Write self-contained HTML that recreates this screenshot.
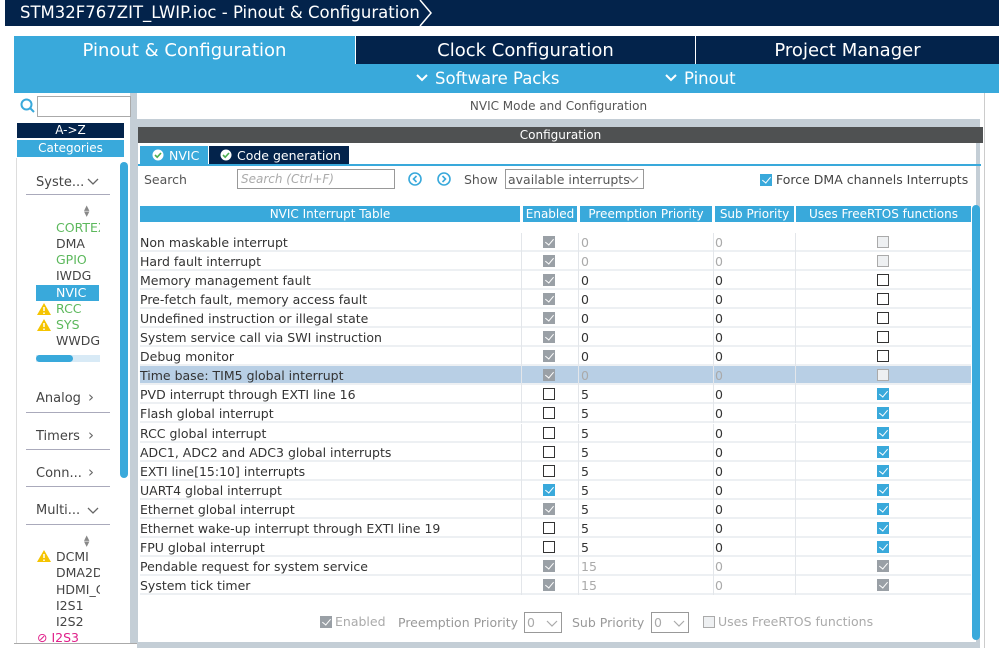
<!DOCTYPE html>
<html><head><meta charset="utf-8"><style>
*{margin:0;padding:0;box-sizing:border-box}
body{width:999px;height:648px;overflow:hidden;background:#fff;font-family:"DejaVu Sans","Liberation Sans",sans-serif;font-size:12.5px;color:#333;position:relative}
.a{position:absolute;white-space:nowrap}
.navy{background:#03234b}
.lb{background:#39a9db}
.cb{position:absolute;width:12px;height:12px;border:1px solid #333;background:#fff}
.cb.g{background:#9aa0a6;border-color:#9aa0a6}
.cb.gu{border-color:#aaa;background:#eef0f2}
.cb.b{background:#39a9db;border-color:#39a9db}
.cb.g::after,.cb.b::after{content:"";position:absolute;left:3px;top:0px;width:4px;height:7px;border:solid #fff;border-width:0 1.5px 1.5px 0;transform:rotate(40deg)}
.row{position:absolute;left:140px;width:831px;height:19.1px;border-bottom:2px solid #edf0f3}
.row span{position:absolute;top:2px;white-space:nowrap}
.row .gr{color:#aaa}
.vs{position:absolute;top:0;height:19px;width:1px;background:#e3e6ea}
.cat{position:absolute;left:37px;font-size:12.5px;color:#444;white-space:nowrap}
.warn{position:absolute;left:37px}
</style></head><body>
<div class="a navy" style="left:5px;top:0;width:994px;height:26px"></div>
<div class="a" style="left:20px;top:3px;color:#fff;font-size:16.5px">STM32F767ZIT_LWIP.ioc - Pinout &amp; Configuration</div>
<svg class="a" style="left:418px;top:0" width="18" height="27"><path d="M2 0 L13 13 L2 26" stroke="#fff" stroke-width="1.5" fill="none"/></svg>
<div class="a lb" style="left:14px;top:36px;width:341px;height:28px;color:#fff;font-size:18px;text-align:center;line-height:30px">Pinout &amp; Configuration</div>
<div class="a navy" style="left:356px;top:36px;width:339px;height:28px;color:#fff;font-size:18px;text-align:center;line-height:30px">Clock Configuration</div>
<div class="a navy" style="left:696px;top:36px;width:303px;height:28px;color:#fff;font-size:18px;text-align:center;line-height:30px">Project Manager</div>
<div class="a lb" style="left:14px;top:64px;width:985px;height:29px"></div>
<svg class="a" style="left:415px;top:73px" width="14" height="10"><path d="M2 2 L7 7 L12 2" stroke="#fff" stroke-width="2" fill="none"/></svg>
<div class="a" style="left:435px;top:69px;color:#fff;font-size:16.5px">Software Packs</div>
<svg class="a" style="left:664px;top:73px" width="14" height="10"><path d="M2 2 L7 7 L12 2" stroke="#fff" stroke-width="2" fill="none"/></svg>
<div class="a" style="left:684px;top:69px;color:#fff;font-size:16.5px">Pinout</div>
<div class="a" style="left:14px;top:93px;width:124px;height:555px;background:#c4ced6"></div>
<div class="a" style="left:14px;top:93px;width:116px;height:555px;background:#fff"></div>
<svg class="a" style="left:20px;top:98px" width="16" height="16"><circle cx="6.5" cy="6.5" r="5" stroke="#39a9db" stroke-width="2" fill="none"/><path d="M10 10 L14 14" stroke="#39a9db" stroke-width="2"/></svg>
<div class="a" style="left:37px;top:96px;width:94px;height:21px;border:1px solid #aaa"></div>
<div class="a navy" style="left:17px;top:123px;width:107px;height:15px;color:#fff;font-size:12px;text-align:center;line-height:15px">A-&gt;Z</div>
<div class="a lb" style="left:17px;top:140px;width:107px;height:17px;color:#fff;font-size:12px;text-align:center;line-height:17px">Categories</div>
<div class="a" style="left:16px;top:158px;width:112px;height:490px;border-left:1px solid #ddd"></div>
<div class="a lb" style="left:120px;top:162px;width:8px;height:316px;border-radius:4px"></div>
<div class="a" style="left:36px;top:175px;font-size:13px;color:#444">Syste...</div>
<svg class="a" style="left:87px;top:177px" width="12" height="9"><path d="M1 2 L6 7 L11 2" stroke="#666" stroke-width="1.3" fill="none"/></svg>
<div class="a" style="left:26px;top:194px;width:84px;height:1px;background:#aab"></div>
<div class="a" style="left:84px;top:205px;font-size:7px;color:#888;line-height:6px">▲<br>▼</div>
<div class="cat" style="left:56px;top:220px;color:#5cb85c;width:44px;overflow:hidden">CORTEX</div>
<div class="cat" style="left:56px;top:236px">DMA</div>
<div class="cat" style="left:56px;top:252px;color:#5cb85c">GPIO</div>
<div class="cat" style="left:56px;top:268px">IWDG</div>
<div class="a lb" style="left:36px;top:285px;width:63px;height:16px"></div>
<div class="cat" style="left:56px;top:285px;color:#fff">NVIC</div>
<svg class="warn" style="top:303px" width="14" height="12"><path d="M7 0 L14 12 L0 12Z" fill="#f5c400"/><path d="M7 4 V8 M7 9.5 V11" stroke="#fff" stroke-width="1.5"/></svg><div class="cat" style="left:56px;top:301px;color:#5cb85c">RCC</div>
<svg class="warn" style="top:319px" width="14" height="12"><path d="M7 0 L14 12 L0 12Z" fill="#f5c400"/><path d="M7 4 V8 M7 9.5 V11" stroke="#fff" stroke-width="1.5"/></svg><div class="cat" style="left:56px;top:317px;color:#5cb85c">SYS</div>
<div class="cat" style="left:56px;top:333px">WWDG</div>
<div class="a" style="left:36px;top:355px;width:64px;height:7px;background:#d8eaf6"></div>
<div class="a lb" style="left:36px;top:355px;width:37px;height:7px;border-radius:4px"></div>
<div class="a" style="left:36px;top:391px;font-size:13px;color:#444">Analog</div><div class="a" style="left:88px;top:388px;font-size:15px;color:#666">›</div>
<div class="a" style="left:26px;top:412px;width:84px;height:1px;background:#aab"></div>
<div class="a" style="left:36px;top:429px;font-size:13px;color:#444">Timers</div><div class="a" style="left:88px;top:426px;font-size:15px;color:#666">›</div>
<div class="a" style="left:26px;top:449px;width:84px;height:1px;background:#aab"></div>
<div class="a" style="left:36px;top:466px;font-size:13px;color:#444">Conn...</div><div class="a" style="left:88px;top:463px;font-size:15px;color:#666">›</div>
<div class="a" style="left:26px;top:486px;width:84px;height:1px;background:#aab"></div>
<div class="a" style="left:36px;top:503px;font-size:13px;color:#444">Multi...</div>
<svg class="a" style="left:87px;top:506px" width="12" height="9"><path d="M1 2 L6 7 L11 2" stroke="#666" stroke-width="1.3" fill="none"/></svg>
<div class="a" style="left:26px;top:524px;width:84px;height:1px;background:#aab"></div>
<div class="a" style="left:84px;top:535px;font-size:7px;color:#888;line-height:6px">▲<br>▼</div>
<svg class="warn" style="top:550px" width="14" height="12"><path d="M7 0 L14 12 L0 12Z" fill="#f5c400"/><path d="M7 4 V8 M7 9.5 V11" stroke="#fff" stroke-width="1.5"/></svg><div class="cat" style="left:56px;top:549px">DCMI</div>
<div class="cat" style="left:56px;top:565px;width:44px;overflow:hidden">DMA2D</div>
<div class="cat" style="left:56px;top:582px;width:44px;overflow:hidden">HDMI_C</div>
<div class="cat" style="left:56px;top:598px">I2S1</div>
<div class="cat" style="left:56px;top:614px">I2S2</div>
<div class="cat" style="left:37px;top:630px;color:#e0208a">⊘ I2S3</div>
<div class="a" style="left:14px;top:643px;width:124px;height:5px;background:#fff;border-top:1px solid #aaa"></div>
<div class="a" style="left:137px;top:93px;width:843px;height:555px;background:#c4ced6"></div>
<div class="a" style="left:137px;top:93px;width:843px;height:26px;background:#fff;text-align:center;line-height:26px;font-size:12px;color:#555">NVIC Mode and Configuration</div>
<div class="a" style="left:138px;top:127px;width:845px;height:16px;background:#4f5152;color:#fff;font-size:12px;text-align:center;line-height:16px">Configuration</div>
<div class="a" style="left:138px;top:143px;width:838px;height:499px;background:#fff"></div>
<div class="a lb" style="left:140px;top:146px;width:68px;height:19px;color:#fff;font-size:12.5px;line-height:19px;padding-left:29px">NVIC</div>
<div class="a navy" style="left:209px;top:146px;width:140px;height:19px;color:#fff;font-size:12.5px;line-height:19px;padding-left:28px">Code generation</div>
<svg class="a" style="left:152px;top:149px" width="12" height="12"><circle cx="6" cy="6" r="5.5" fill="#fff"/><path d="M3 6 L5.2 8.2 L9 4" stroke="#4caf50" stroke-width="1.6" fill="none"/></svg>
<svg class="a" style="left:220px;top:149px" width="12" height="12"><circle cx="6" cy="6" r="5.5" fill="#fff"/><path d="M3 6 L5.2 8.2 L9 4" stroke="#4caf50" stroke-width="1.6" fill="none"/></svg>
<div class="a lb" style="left:138px;top:164px;width:843px;height:2px"></div>
<div class="a" style="left:144px;top:172px;font-size:12.5px;color:#555">Search</div>
<div class="a" style="left:237px;top:169px;width:158px;height:20px;border:1px solid #999;color:#aaa;font-style:italic;font-size:12px;padding:2px 3px">Search (Ctrl+F)</div>
<svg class="a" style="left:407px;top:171px" width="48" height="16"><circle cx="8" cy="8" r="6" stroke="#39a9db" stroke-width="1.6" fill="none"/><path d="M9.5 5 L6.5 8 L9.5 11" stroke="#39a9db" stroke-width="1.6" fill="none"/><circle cx="37" cy="8" r="6" stroke="#39a9db" stroke-width="1.6" fill="none"/><path d="M35.5 5 L38.5 8 L35.5 11" stroke="#39a9db" stroke-width="1.6" fill="none"/></svg>
<div class="a" style="left:464px;top:172px;color:#555">Show</div>
<div class="a" style="left:505px;top:169px;width:139px;height:20px;border:1px solid #999;color:#555;font-size:12.5px;padding:2px 2px;overflow:hidden">available interrupts</div>
<svg class="a" style="left:627px;top:175px" width="12" height="9"><path d="M1 2 L6 7 L11 2" stroke="#888" stroke-width="1.2" fill="none"/></svg>
<div class="cb b" style="left:760px;top:174px"></div>
<div class="a" style="left:776px;top:172px;color:#444;font-size:12.5px">Force DMA channels Interrupts</div>
<div class="a lb" style="left:140px;top:206px;width:380px;height:16px;color:#fff;font-size:12px;text-align:center;line-height:16px">NVIC Interrupt Table</div>
<div class="a lb" style="left:523px;top:206px;width:54px;height:16px;color:#fff;font-size:12px;text-align:center;line-height:16px">Enabled</div>
<div class="a lb" style="left:580px;top:206px;width:132px;height:16px;color:#fff;font-size:12px;text-align:center;line-height:16px">Preemption Priority</div>
<div class="a lb" style="left:715px;top:206px;width:79px;height:16px;color:#fff;font-size:12px;text-align:center;line-height:16px">Sub Priority</div>
<div class="a lb" style="left:796px;top:206px;width:175px;height:16px;color:#fff;font-size:12px;text-align:center;line-height:16px">Uses FreeRTOS functions</div>
<div class="a lb" style="left:972px;top:205px;width:8px;height:435px;border-radius:4px"></div>
<div class="row" style="top:232.5px"><span>Non maskable interrupt</span><div class="vs" style="left:381px"></div><div class="cb g" style="left:403px;top:3px"></div><div class="vs" style="left:438px"></div><span class="gr" style="left:441px">0</span><div class="vs" style="left:573px"></div><span class="gr" style="left:575px">0</span><div class="vs" style="left:655px"></div><div class="cb gu" style="left:737px;top:3px"></div></div>
<div class="row" style="top:251.6px"><span>Hard fault interrupt</span><div class="vs" style="left:381px"></div><div class="cb g" style="left:403px;top:3px"></div><div class="vs" style="left:438px"></div><span class="gr" style="left:441px">0</span><div class="vs" style="left:573px"></div><span class="gr" style="left:575px">0</span><div class="vs" style="left:655px"></div><div class="cb gu" style="left:737px;top:3px"></div></div>
<div class="row" style="top:270.7px"><span>Memory management fault</span><div class="vs" style="left:381px"></div><div class="cb g" style="left:403px;top:3px"></div><div class="vs" style="left:438px"></div><span style="left:441px">0</span><div class="vs" style="left:573px"></div><span style="left:575px">0</span><div class="vs" style="left:655px"></div><div class="cb" style="left:737px;top:3px"></div></div>
<div class="row" style="top:289.8px"><span>Pre-fetch fault, memory access fault</span><div class="vs" style="left:381px"></div><div class="cb g" style="left:403px;top:3px"></div><div class="vs" style="left:438px"></div><span style="left:441px">0</span><div class="vs" style="left:573px"></div><span style="left:575px">0</span><div class="vs" style="left:655px"></div><div class="cb" style="left:737px;top:3px"></div></div>
<div class="row" style="top:308.9px"><span>Undefined instruction or illegal state</span><div class="vs" style="left:381px"></div><div class="cb g" style="left:403px;top:3px"></div><div class="vs" style="left:438px"></div><span style="left:441px">0</span><div class="vs" style="left:573px"></div><span style="left:575px">0</span><div class="vs" style="left:655px"></div><div class="cb" style="left:737px;top:3px"></div></div>
<div class="row" style="top:328px"><span>System service call via SWI instruction</span><div class="vs" style="left:381px"></div><div class="cb g" style="left:403px;top:3px"></div><div class="vs" style="left:438px"></div><span style="left:441px">0</span><div class="vs" style="left:573px"></div><span style="left:575px">0</span><div class="vs" style="left:655px"></div><div class="cb" style="left:737px;top:3px"></div></div>
<div class="row" style="top:347.1px"><span>Debug monitor</span><div class="vs" style="left:381px"></div><div class="cb g" style="left:403px;top:3px"></div><div class="vs" style="left:438px"></div><span style="left:441px">0</span><div class="vs" style="left:573px"></div><span style="left:575px">0</span><div class="vs" style="left:655px"></div><div class="cb" style="left:737px;top:3px"></div></div>
<div class="row" style="top:366.2px;background:#b8cfe5"><span>Time base: TIM5 global interrupt</span><div class="vs" style="left:381px"></div><div class="cb g" style="left:403px;top:3px"></div><div class="vs" style="left:438px"></div><span class="gr" style="left:441px">0</span><div class="vs" style="left:573px"></div><span class="gr" style="left:575px">0</span><div class="vs" style="left:655px"></div><div class="cb gu" style="left:737px;top:3px"></div></div>
<div class="row" style="top:385.3px"><span>PVD interrupt through EXTI line 16</span><div class="vs" style="left:381px"></div><div class="cb" style="left:403px;top:3px"></div><div class="vs" style="left:438px"></div><span style="left:441px">5</span><div class="vs" style="left:573px"></div><span style="left:575px">0</span><div class="vs" style="left:655px"></div><div class="cb b" style="left:737px;top:3px"></div></div>
<div class="row" style="top:404.4px"><span>Flash global interrupt</span><div class="vs" style="left:381px"></div><div class="cb" style="left:403px;top:3px"></div><div class="vs" style="left:438px"></div><span style="left:441px">5</span><div class="vs" style="left:573px"></div><span style="left:575px">0</span><div class="vs" style="left:655px"></div><div class="cb b" style="left:737px;top:3px"></div></div>
<div class="row" style="top:423.5px"><span>RCC global interrupt</span><div class="vs" style="left:381px"></div><div class="cb" style="left:403px;top:3px"></div><div class="vs" style="left:438px"></div><span style="left:441px">5</span><div class="vs" style="left:573px"></div><span style="left:575px">0</span><div class="vs" style="left:655px"></div><div class="cb b" style="left:737px;top:3px"></div></div>
<div class="row" style="top:442.6px"><span>ADC1, ADC2 and ADC3 global interrupts</span><div class="vs" style="left:381px"></div><div class="cb" style="left:403px;top:3px"></div><div class="vs" style="left:438px"></div><span style="left:441px">5</span><div class="vs" style="left:573px"></div><span style="left:575px">0</span><div class="vs" style="left:655px"></div><div class="cb b" style="left:737px;top:3px"></div></div>
<div class="row" style="top:461.7px"><span>EXTI line[15:10] interrupts</span><div class="vs" style="left:381px"></div><div class="cb" style="left:403px;top:3px"></div><div class="vs" style="left:438px"></div><span style="left:441px">5</span><div class="vs" style="left:573px"></div><span style="left:575px">0</span><div class="vs" style="left:655px"></div><div class="cb b" style="left:737px;top:3px"></div></div>
<div class="row" style="top:480.8px"><span>UART4 global interrupt</span><div class="vs" style="left:381px"></div><div class="cb b" style="left:403px;top:3px"></div><div class="vs" style="left:438px"></div><span style="left:441px">5</span><div class="vs" style="left:573px"></div><span style="left:575px">0</span><div class="vs" style="left:655px"></div><div class="cb b" style="left:737px;top:3px"></div></div>
<div class="row" style="top:499.9px"><span>Ethernet global interrupt</span><div class="vs" style="left:381px"></div><div class="cb g" style="left:403px;top:3px"></div><div class="vs" style="left:438px"></div><span style="left:441px">5</span><div class="vs" style="left:573px"></div><span style="left:575px">0</span><div class="vs" style="left:655px"></div><div class="cb b" style="left:737px;top:3px"></div></div>
<div class="row" style="top:519px"><span>Ethernet wake-up interrupt through EXTI line 19</span><div class="vs" style="left:381px"></div><div class="cb" style="left:403px;top:3px"></div><div class="vs" style="left:438px"></div><span style="left:441px">5</span><div class="vs" style="left:573px"></div><span style="left:575px">0</span><div class="vs" style="left:655px"></div><div class="cb b" style="left:737px;top:3px"></div></div>
<div class="row" style="top:538.1px"><span>FPU global interrupt</span><div class="vs" style="left:381px"></div><div class="cb" style="left:403px;top:3px"></div><div class="vs" style="left:438px"></div><span style="left:441px">5</span><div class="vs" style="left:573px"></div><span style="left:575px">0</span><div class="vs" style="left:655px"></div><div class="cb b" style="left:737px;top:3px"></div></div>
<div class="row" style="top:557.2px"><span>Pendable request for system service</span><div class="vs" style="left:381px"></div><div class="cb g" style="left:403px;top:3px"></div><div class="vs" style="left:438px"></div><span class="gr" style="left:441px">15</span><div class="vs" style="left:573px"></div><span class="gr" style="left:575px">0</span><div class="vs" style="left:655px"></div><div class="cb g" style="left:737px;top:3px"></div></div>
<div class="row" style="top:576.3px"><span>System tick timer</span><div class="vs" style="left:381px"></div><div class="cb g" style="left:403px;top:3px"></div><div class="vs" style="left:438px"></div><span class="gr" style="left:441px">15</span><div class="vs" style="left:573px"></div><span class="gr" style="left:575px">0</span><div class="vs" style="left:655px"></div><div class="cb g" style="left:737px;top:3px"></div></div>
<div class="cb g" style="left:320px;top:616px"></div>
<div class="a" style="left:335px;top:614px;color:#aaa;font-size:12.5px">Enabled</div>
<div class="a" style="left:398px;top:615px;color:#999;font-size:12.5px">Preemption Priority</div>
<div class="a" style="left:524px;top:612px;width:38px;height:21px;border:1px solid #999;color:#aaa;padding:2px 2px">0</div>
<svg class="a" style="left:546px;top:619px" width="12" height="9"><path d="M1 2 L6 7 L11 2" stroke="#aaa" stroke-width="1.2" fill="none"/></svg>
<div class="a" style="left:572px;top:615px;color:#999;font-size:12.5px">Sub Priority</div>
<div class="a" style="left:651px;top:612px;width:38px;height:21px;border:1px solid #999;color:#aaa;padding:2px 2px">0</div>
<svg class="a" style="left:673px;top:619px" width="12" height="9"><path d="M1 2 L6 7 L11 2" stroke="#aaa" stroke-width="1.2" fill="none"/></svg>
<div class="cb gu" style="left:703px;top:616px"></div>
<div class="a" style="left:718px;top:614px;color:#aaa;font-size:12.5px">Uses FreeRTOS functions</div>
<div class="a" style="left:137px;top:642px;width:843px;height:6px;background:#c4ced6"></div>
<div class="a" style="left:984px;top:93px;width:15px;height:555px;background:#fff;border-left:1px solid #ccc"></div>
</body></html>
